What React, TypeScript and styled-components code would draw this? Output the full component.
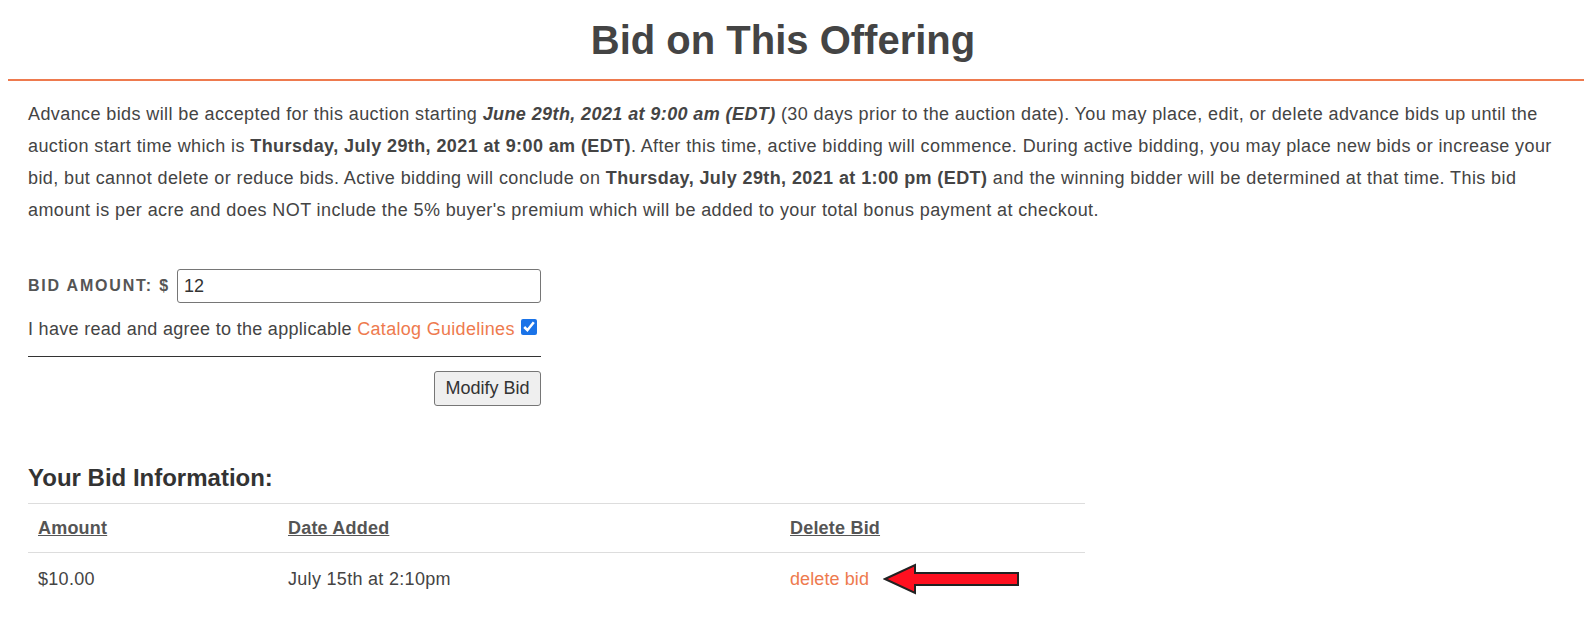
import styled, { createGlobalStyle } from 'styled-components';

const GlobalStyle = createGlobalStyle`
  body {
    margin: 8px;
    font-family: "Liberation Sans", Arial, sans-serif;
    color: #444;
    background: #fff;
  }
`

type Bid = {
  amount: string
  added: string
}

const bids: Bid[] = [{ amount: '$10.00', added: 'July 15th at 2:10pm' }]

const Arrow = () => (
  <svg width="138" height="32" viewBox="0 0 138 32">
    <polygon
      points="2,16 32,2 32,10 135,10 135,22 32,22 32,30"
      fill="#ff1020"
      stroke="#222"
      strokeWidth="2"
      strokeLinejoin="miter"
    />
  </svg>
)

export default function App() {
  return (
    <>
      <GlobalStyle />
      <Page>
        <Title>Bid on This Offering</Title>
        <Content>
          <Intro>
            Advance bids will be accepted for this auction starting{' '}
            <strong><em>June 29th, 2021 at 9:00 am (EDT)</em></strong> (30 days prior to the auction date).
            You may place, edit, or delete advance bids up until the auction start time which is{' '}
            <strong>Thursday, July 29th, 2021 at 9:00 am (EDT)</strong>. After this time, active bidding
            will commence. During active bidding, you may place new bids or increase your bid, but cannot
            delete or reduce bids. Active bidding will conclude on{' '}
            <strong>Thursday, July 29th, 2021 at 1:00 pm (EDT)</strong> and the winning bidder will be
            determined at that time. This bid amount is per acre and does NOT include the 5% buyer's
            premium which will be added to your total bonus payment at checkout.
          </Intro>

          <BidForm onSubmit={e => e.preventDefault()}>
            <AmountRow>
              <Label htmlFor="bid">Bid Amount: $</Label>
              <AmountInput id="bid" defaultValue="12" />
            </AmountRow>
            <AgreeRow>
              I have read and agree to the applicable <Link href="#">Catalog Guidelines</Link>
              <Check type="checkbox" defaultChecked />
            </AgreeRow>
            <Divider />
            <Actions>
              <Button type="submit">Modify Bid</Button>
            </Actions>
          </BidForm>

          <SubTitle>Your Bid Information:</SubTitle>
          <Table>
            <thead>
              <tr>
                <Th $w={250}>Amount</Th>
                <Th $w={502}>Date Added</Th>
                <Th>Delete Bid</Th>
              </tr>
            </thead>
            <tbody>
              {bids.map(b => (
                <tr key={b.added}>
                  <Td>{b.amount}</Td>
                  <Td>{b.added}</Td>
                  <Td>
                    <DeleteCell>
                      <Link href="#">delete bid</Link>
                      <Arrow />
                    </DeleteCell>
                  </Td>
                </tr>
              ))}
            </tbody>
          </Table>
        </Content>
      </Page>
    </>
  );
}

const Page = styled.div`
  width: 100%;
`
const Title = styled.h1`
  margin: 0;
  padding: 7px 26px 14px 0;
  font-size: 40px;
  line-height: 50px;
  font-weight: bold;
  text-align: center;
  color: #444;
  border-bottom: 2px solid #ee7a4e;
`
const Content = styled.div`
  padding: 0 20px;
`
const Intro = styled.p`
  margin: 17px 0 43px;
  font-size: 18px;
  line-height: 32px;
  letter-spacing: 0.4px;
  color: #444;
`
const BidForm = styled.form`
  width: 513px;
`
const AmountRow = styled.div`
  display: flex;
  align-items: center;
  gap: 7px;
`
const Label = styled.label`
  font-size: 16px;
  font-weight: bold;
  letter-spacing: 1.8px;
  text-transform: uppercase;
  color: #555;
  white-space: nowrap;
`
const AmountInput = styled.input`
  flex: 1;
  height: 34px;
  box-sizing: border-box;
  padding: 0 6px;
  border: 1px solid #767676;
  border-radius: 3px;
  font-family: "Liberation Sans", Arial, sans-serif;
  font-size: 18px;
  color: #333;
`
const AgreeRow = styled.div`
  display: flex;
  align-items: center;
  margin-top: 12px;
  font-size: 18px;
  line-height: 28px;
  letter-spacing: 0.3px;
  color: #444;
  white-space: pre;
`
const Link = styled.a`
  color: #ee7a4e;
  text-decoration: none;
`
const Check = styled.input`
  width: 16px;
  height: 16px;
  margin: 0 0 4px 6px;
  accent-color: #1a73e8;
`
const Divider = styled.hr`
  margin: 13px 0 14px;
  border: 0;
  border-top: 1px solid #333;
`
const Actions = styled.div`
  display: flex;
  justify-content: flex-end;
`
const Button = styled.button`
  height: 35px;
  width: 107px;
  padding: 0;
  border: 1px solid #767676;
  border-radius: 3px;
  background: #efefef;
  font-family: "Liberation Sans", Arial, sans-serif;
  font-size: 18px;
  color: #333;
`
const SubTitle = styled.h2`
  margin: 57px 0 10px;
  font-size: 24px;
  line-height: 30px;
  font-weight: bold;
  color: #333;
`
const Table = styled.table`
  width: 1057px;
  border-collapse: collapse;
  border-top: 1px solid #ddd;
`
const Th = styled.th<{ $w?: number }>`
  width: ${p => (p.$w ? `${p.$w}px` : 'auto')};
  box-sizing: border-box;
  padding: 10px;
  height: 49px;
  text-align: left;
  font-size: 18px;
  font-weight: bold;
  letter-spacing: 0.2px;
  text-decoration: underline;
  color: #555;
  border-bottom: 1px solid #ddd;
`
const Td = styled.td`
  padding: 10px;
  height: 49px;
  box-sizing: border-box;
  font-size: 18px;
  letter-spacing: 0.3px;
  color: #444;
`
const DeleteCell = styled.div`
  display: flex;
  align-items: center;
  gap: 14px;
  letter-spacing: 0.1px;
`
